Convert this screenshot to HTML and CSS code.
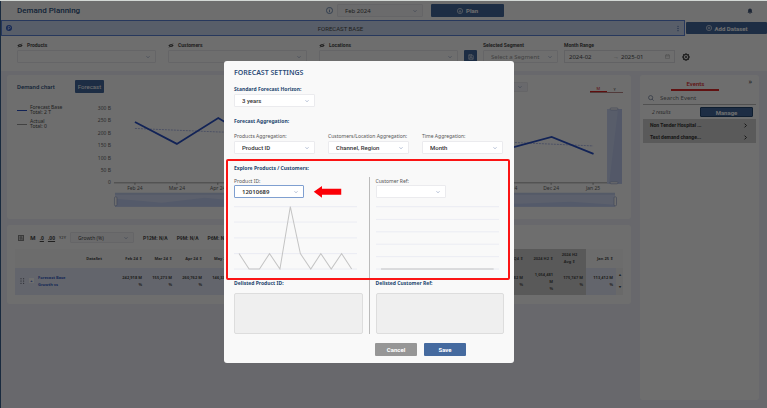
FILE: index.html
```
<!DOCTYPE html>
<html lang="en">
<head>
    <meta charset="UTF-8">
    <meta name="viewport" content="width=device-width, initial-scale=1.0">
    <title>Demand Planning</title>
    <link rel="stylesheet" href="styles.css">
</head>
<body>

    <div class="app">
        <header class="topbar">
            <h1 class="topbar-title">Demand Planning</h1>
            <svg class="icon-info" viewBox="0 0 16 16" fill="none" stroke="currentColor" stroke-width="1.6"><circle cx="8" cy="8" r="7"/><path d="M8 7v5M8 4v1.6"/></svg>
            <select class="select topbar-month" aria-label="Month"><option>Feb 2024</option></select>
            <button class="btn btn-plan"><svg class="btn-icon" viewBox="0 0 16 16" fill="none" stroke="currentColor" stroke-width="1.6"><circle cx="8" cy="8" r="7"/><path d="M8 4.5v7M5 8.500l3 3 3-3"/></svg>Plan</button>
            <svg class="icon-bell" viewBox="0 0 16 16" fill="currentColor"><path d="M8 1a5 5 0 0 0-5 5v4l-1.500 2.500h13L13 10V6a5 5 0 0 0-5-5zM6 13.500h4a2 2 0 0 1-4 0z"/></svg>
        </header>

        <div class="dataset-row">
            <div class="dataset">
                <svg class="icon-p" viewBox="0 0 16 16"><circle cx="8" cy="8" r="8" fill="#3560c8"/><path d="M6 13V4h3a2.500 2.500 0 0 1 0 5.500H6" fill="none" stroke="#dce8ff" stroke-width="1.8"/></svg>
                <span class="dataset-name">FORECAST BASE</span>
                <svg class="icon-dots" viewBox="0 0 4 16" fill="#4d6fb0"><circle cx="2" cy="3" r="1.500"/><circle cx="2" cy="8" r="1.500"/><circle cx="2" cy="13" r="1.500"/></svg>
            </div>
            <button class="btn btn-dataset"><svg class="btn-icon" viewBox="0 0 16 16" fill="none" stroke="currentColor" stroke-width="1.6"><circle cx="8" cy="8" r="7"/><path d="M8 4.500v7M4.500 8h7"/></svg>Add Dataset</button>
        </div>

        <div class="filters">
            <div class="field field-wide">
                <label for="products"><svg class="icon-eye" viewBox="0 0 18 14"><path d="M1 7Q9-2 17 7Q9 16 1 7z" fill="currentColor"/><circle cx="9" cy="7" r="2.500" fill="#fff"/><path d="M3 13L15 1" stroke="currentColor" stroke-width="2"/></svg>Products</label>
                <select class="select" id="products"><option></option></select>
            </div>
            <div class="field field-wide">
                <label for="customers"><svg class="icon-eye" viewBox="0 0 18 14"><path d="M1 7Q9-2 17 7Q9 16 1 7z" fill="currentColor"/><circle cx="9" cy="7" r="2.500" fill="#fff"/><path d="M3 13L15 1" stroke="currentColor" stroke-width="2"/></svg>Customers</label>
                <select class="select" id="customers"><option></option></select>
            </div>
            <div class="field field-wide">
                <label for="locations"><svg class="icon-eye" viewBox="0 0 18 14"><path d="M1 7Q9-2 17 7Q9 16 1 7z" fill="currentColor"/><circle cx="9" cy="7" r="2.500" fill="#fff"/><path d="M3 13L15 1" stroke="currentColor" stroke-width="2"/></svg>Locations</label>
                <select class="select" id="locations"><option></option></select>
            </div>
            <button class="btn btn-save-filter" aria-label="Save segment"><svg viewBox="0 0 16 16" fill="none" stroke="currentColor" stroke-width="1.500"><path d="M2 2h9l3 3v9H2zM5 2v4h5V2M5 14v-5h6v5"/></svg></button>
            <div class="field field-segment">
                <label for="segment">Selected Segment</label>
                <select class="select muted" id="segment"><option>Select a Segment</option></select>
            </div>
            <div class="field field-range">
                <label for="from">Month Range</label>
                <div class="range">
                    <input id="from" type="text" value="2024-02">
                    <span class="range-sep">→</span>
                    <input type="text" value="2025-01" aria-label="Month range end">
                    <svg class="icon-cal" viewBox="0 0 16 16" fill="none" stroke="currentColor" stroke-width="1.300"><path d="M1.500 3h13v11h-13zM1.500 6.500h13M5 1v3M11 1v3"/></svg>
                </div>
            </div>
            <svg class="icon-gear" viewBox="0 0 16 16" fill="none" stroke="currentColor"><circle cx="8" cy="8" r="5.500" stroke-width="2.500"/><circle cx="8" cy="8" r="1.800" fill="currentColor"/><path d="M8 0v3M8 13v3M0 8h3M13 8h3M2.400 2.400l2 2M11.600 11.600l2 2M13.600 2.400l-2 2M4.400 11.600l-2 2" stroke-width="2"/></svg>
        </div>

        <main class="content">
            <div class="main-col">
                <section class="card chart-card">
                    <div class="chart-head">
                        <h2>Demand chart</h2>
                        <button class="btn btn-forecast">Forecast</button>
                        <select class="select chart-select" aria-label="Chart type"><option></option></select>
                        <div class="period"><button class="active">M</button><button>Y</button></div>
                    </div>
                    <div class="chart-body">
                        <ul class="legend">
                            <li class="legend-base">Forecast Base<br>Total: 2 T</li>
                            <li class="legend-actual">Actual<br>Total: 0</li>
                        </ul>
                        <svg class="demand-chart" viewBox="97 100 527 115">
                            <g class="chart-text" text-anchor="end">
                                <text x="111" y="110">300 B</text>
                                <text x="111" y="122">250 B</text>
                                <text x="111" y="135">200 B</text>
                                <text x="111" y="147">150 B</text>
                                <text x="111" y="160">100 B</text>
                                <text x="111" y="172">50 B</text>
                                <text x="111" y="184">0</text>
                            </g>
                            <path d="M114 183H622M135 183v2M177 183v2M218 183v2M552 183v2M594 183v2" stroke="#777" stroke-width="0.700"/>
                            <g class="chart-text" text-anchor="middle">
                                <text x="135" y="190">Feb 24</text>
                                <text x="177" y="190">Mar 24</text>
                                <text x="218" y="190">Apr 24</text>
                                <text x="260" y="190">May 24</text>
                                <text x="510" y="190">Nov 24</text>
                                <text x="552" y="190">Dec 24</text>
                                <text x="594" y="190">Jan 25</text>
                            </g>
                            <path d="M135 128.500L218 132L300 134L420 139L513 142.500L594 146" fill="none" stroke="#8c9bdc" stroke-width="0.700" stroke-dasharray="2 1"/>
                            <path d="M135 122L177 144L218.500 118L260 143L302 130L344 150L427 125L469 140L510 148.500L552.500 137L594.500 154" fill="none" stroke="#2b52c8" stroke-width="1.800"/>
                            <rect x="115" y="193" width="501" height="14" fill="#d5dffa"/>
                            <path d="M115 199L140 201L162 203L205 198L260 203L480 203L520 204L572 202L616 205V207H115z" fill="#c3d0f5"/>
                            <rect x="115" y="193" width="501" height="2" fill="#c4d1ee"/>
                            <rect x="114.500" y="197" width="2.500" height="9" rx="1" fill="#fff" stroke="#8e9cc4" stroke-width="0.600"/>
                            <rect x="615" y="197" width="2.500" height="9" rx="1" fill="#fff" stroke="#8e9cc4" stroke-width="0.600"/>
                            <rect x="608" y="109" width="15" height="75" fill="#cdd8f6"/>
                            <path d="M619 109h4v75h-13z" fill="#c0cdf2"/>
                            <rect x="611" y="108" width="8" height="2" rx="1" fill="#fff" stroke="#8e9cc4" stroke-width="0.600"/>
                            <rect x="611" y="182" width="8" height="2" rx="1" fill="#fff" stroke="#8e9cc4" stroke-width="0.600"/>
                        </svg>
                    </div>
                </section>

                <section class="card table-card">
                    <div class="tools">
                        <button class="tool" aria-label="Export"><svg viewBox="0 0 16 16" fill="none" stroke="currentColor" stroke-width="2"><path d="M1 1h14v14H1zM4 5h8M4 8h8M4 11h5M11 9v4"/></svg></button>
                        <button class="tool tool-m">M</button>
                        <button class="tool tool-dec">.0</button>
                        <button class="tool tool-dec">.00</button>
                        <button class="tool tool-y">Y2Y</button>
                        <select class="select growth" aria-label="Measure"><option>Growth (%)</option></select>
                        <b>P12M: N/A</b>
                        <b>P9M: N/A</b>
                        <b>P6M: N/A</b>
                    </div>
                    <div class="table-wrap">
                        <table class="grid">
                            <colgroup>
                                <col class="col-drag"><col class="col-name"><col class="col-num"><col class="col-num"><col class="col-num"><col class="col-num"><col><col class="col-num"><col class="col-num"><col class="col-num"><col class="col-num"><col class="col-scroll">
                            </colgroup>
                            <thead>
                                <tr>
                                    <th></th><th class="name-head">DataSet</th><th>Feb 24 ⇕</th><th>Mar 24 ⇕</th><th>Apr 24 ⇕</th><th>May 24 ⇕</th><th></th>
                                    <th class="sum">2024 Q4 ⇕</th><th class="sum">2024 H2 ⇕</th><th class="sum center">2024 H2<br>Avg ⇕</th><th>Jan 25 ⇕</th><th></th>
                                </tr>
                            </thead>
                            <tbody>
                                <tr>
                                    <td><svg class="icon-drag" viewBox="0 0 12 16" fill="#445"><circle cx="2" cy="2" r="1.500"/><circle cx="9" cy="2" r="1.500"/><circle cx="2" cy="8" r="1.500"/><circle cx="9" cy="8" r="1.500"/><circle cx="2" cy="14" r="1.500"/><circle cx="9" cy="14" r="1.500"/></svg></td>
                                    <td class="name"><button class="expand">+</button><span>Forecast Base<br>Growth vs</span></td>
                                    <td>242,918 M<br>%</td><td>155,273 M<br>%</td><td>260,762 M<br>%</td><td>146,331 M<br>%</td><td></td>
                                    <td class="sum">525,782 M<br>%</td><td class="sum">1,054,481<br>M<br>%</td><td class="sum">175,747 M<br>%</td><td>113,412 M<br>%</td><td class="scroll"><span>▴</span><span>▾</span></td>
                                </tr>
                            </tbody>
                        </table>
                    </div>
                </section>
            </div>

            <aside class="card events">
                <div class="events-tabs"><button class="events-tab">Events</button><button class="collapse" aria-label="Collapse">»</button></div>
                <div class="search">
                    <svg viewBox="0 0 16 16" fill="none" stroke="currentColor" stroke-width="1.500"><circle cx="7" cy="7" r="5.500"/><path d="M11 11l4 4"/></svg>
                    <input type="text" placeholder="Search Event" aria-label="Search Event">
                </div>
                <div class="results"><i>2 results</i><button class="btn btn-manage">Manage</button></div>
                <ul class="event-list">
                    <li><a href="#">Non Tender Hospital ...<svg viewBox="0 0 8 8"><path d="M2.500 1l3 3-3 3" fill="none" stroke="currentColor" stroke-width="1.600"/></svg></a></li>
                    <li><a href="#">Test demand change...<svg viewBox="0 0 8 8"><path d="M2.500 1l3 3-3 3" fill="none" stroke="currentColor" stroke-width="1.600"/></svg></a></li>
                </ul>
            </aside>
        </main>
    </div>

    <div class="overlay">
        <div class="modal" role="dialog" aria-labelledby="modal-title">
            <h2 class="modal-title" id="modal-title">FORECAST SETTINGS</h2>

            <label class="section-label" for="horizon">Standard Forecast Horizon:</label>
            <select class="select" id="horizon"><option>3 years</option></select>

            <h3 class="section-label section-agg">Forecast Aggregation:</h3>
            <div class="agg">
                <div>
                    <label for="agg-product">Products Aggregation:</label>
                    <select class="select" id="agg-product"><option>Product ID</option></select>
                </div>
                <div>
                    <label for="agg-customer">Customers/Location Aggregation:</label>
                    <select class="select" id="agg-customer"><option>Channel, Region</option></select>
                </div>
                <div>
                    <label for="agg-time">Time Aggregation:</label>
                    <select class="select" id="agg-time"><option>Month</option></select>
                </div>
            </div>

            <h3 class="section-label section-explore">Explore Products / Customers:</h3>
            <div class="explore">
                <div class="explore-col">
                    <label for="product-id">Product ID:</label>
                    <div class="pick">
                        <select class="select focused" id="product-id"><option>12010689</option></select>
                        <svg class="arrow" viewBox="0 0 87 38"><path d="M0 18L26 0V9H87V28H26V37z" fill="#fb0007"/></svg>
                    </div>
                    <svg class="mini-chart" viewBox="0 0 368 190">
                        <path class="mini-grid" d="M0 2H368M0 48H368M0 95H368M0 142H368M0 188H368"/>
                        <path class="mini-line" d="M15 142L45 188H76L106 142L137 188L168 2L198 142L229 188L259 142L290 188L321 142L351 188"/>
                    </svg>
                    <label class="section-label" for="delisted-product">Delisted Product ID:</label>
                    <textarea id="delisted-product" disabled></textarea>
                </div>
                <div class="divider"></div>
                <div class="explore-col">
                    <label for="customer-ref">Customer Ref:</label>
                    <div class="pick">
                        <select class="select" id="customer-ref"><option></option></select>
                    </div>
                    <svg class="mini-chart" viewBox="0 0 368 190">
                        <path class="mini-grid" d="M0 2H368M0 40H368M0 77H368M0 114H368M0 151H368M0 188H368"/>
                        <path class="mini-line" d="M15 188H351"/>
                    </svg>
                    <label class="section-label" for="delisted-customer">Delisted Customer Ref:</label>
                    <textarea id="delisted-customer" disabled></textarea>
                </div>
            </div>

            <div class="actions">
                <button class="btn btn-cancel">Cancel</button>
                <button class="btn">Save</button>
            </div>

            <div class="highlight"></div>
        </div>
    </div>

</body>
</html>
```
FILE: styles.css
```
* {
    box-sizing: border-box;
}

body {
    margin: 0;
    min-height: 100vh;
    border-top: 1px solid #d3d8d5;
    background: #f0f2fa;
    font-family: 'Noto Sans', 'Open Sans', sans-serif;
    font-size: 5px;
    color: #4c4c4c;
}

h1, h2, h3, ul {
    margin: 0;
    padding: 0;
    list-style: none;
}

button, input, select, textarea {
    font: inherit;
    color: inherit;
    border: 0;
    padding: 0;
    background: none;
}

svg {
    display: block;
}

.app {
    display: flex;
    flex-direction: column;
    min-height: calc(100vh - 1px);
    border-left: 1px solid #3b6390;
}

/* Shared controls */
.select {
    display: block;
    width: 100%;
    height: 13px;
    padding: 0 12px 0 7px;
    appearance: none;
    border: 1px solid #ebebee;
    border-radius: 1px;
    background: #fff url("data:image/svg+xml,%3Csvg xmlns='http://www.w3.org/2000/svg' viewBox='0 0 8 8'%3E%3Cpath d='M1 2.500l3 3 3-3' fill='none' stroke='%238899bb' stroke-width='1.300'/%3E%3C/svg%3E") no-repeat right 5px center / 4px 4px;
}

.btn {
    display: flex;
    align-items: center;
    justify-content: center;
    gap: 3px;
    height: 13px;
    border-radius: 1px;
    background: #456a9f;
    color: #fff;
    font-family: Roboto, sans-serif;
    font-size: 6px;
    font-weight: 700;
}

.btn-icon {
    width: 6px;
    height: 6px;
}

/* Header */
.topbar {
    display: flex;
    align-items: center;
    height: 19px;
    padding: 0 14px 0 16px;
    background: #fff;
}

.topbar-title {
    width: 42%;
    font-family: Roboto, sans-serif;
    font-size: 8px;
    font-weight: 500;
    color: #2c527f;
}

.icon-info {
    width: 7px;
    height: 7px;
    margin-right: 4px;
    color: #456a9f;
}

.topbar-month {
    width: 86px;
    margin-right: 8px;
    background-color: #f8f8fa;
    font-size: 6px;
}

.btn-plan {
    width: 73px;
}

.icon-bell {
    width: 6px;
    height: 6px;
    margin-left: auto;
    color: #44597c;
}

.dataset-row {
    display: flex;
    gap: 1px;
    align-items: center;
    background: #fff;
}

.dataset {
    flex: 1;
    display: flex;
    align-items: center;
    height: 16px;
    padding: 0 5px 0 4px;
    border: 1px solid #5b83d8;
    background: #cddbf3;
}

.dataset-name {
    flex: 1;
    padding-right: 8px;
    text-align: center;
    font-family: Roboto, sans-serif;
    font-size: 6px;
}

.icon-p {
    width: 6px;
    height: 6px;
}

.icon-dots {
    width: 2px;
    height: 7px;
}

.btn-dataset {
    width: 81px;
    height: 12px;
}

/* Filters */
.filters {
    display: flex;
    align-items: flex-end;
    gap: 6px;
    height: 35px;
    padding: 0 91px 8px 16px;
    background: #fff;
}

.field label {
    display: flex;
    align-items: center;
    gap: 4px;
    height: 10px;
    font-family: Roboto, sans-serif;
    font-size: 5px;
    font-weight: 700;
}

.field-wide {
    flex: 1;
    margin-right: 6px;
}

.field-wide + .btn-save-filter {
    margin-left: -6px;
}

.field-segment {
    width: 75px;
}

.field-segment .select {
    font-size: 6px;
}

.muted {
    color: #999;
}

.field-range {
    width: 111px;
}

.range {
    display: flex;
    align-items: center;
    height: 13px;
    padding: 0 4px;
    border: 1px solid #e4e4e8;
    font-size: 6px;
}

.range input {
    flex: 1;
    min-width: 0;
}

.range-sep {
    width: 8px;
    color: #aaa;
}

.icon-eye {
    width: 6px;
    height: 5px;
}

.icon-cal {
    width: 5px;
    height: 5px;
    color: #999;
}

.btn-save-filter {
    width: 13px;
}

.btn-save-filter svg {
    width: 6px;
    height: 6px;
}

.icon-gear {
    width: 8px;
    height: 8px;
    margin: 0 -14px 2px 1px;
}

/* Content */
.content {
    flex: 1;
    display: flex;
    gap: 9px;
    padding: 4px 8px 8px 6px;
}

.main-col {
    flex: 1;
    min-width: 0;
    display: flex;
    flex-direction: column;
    gap: 6px;
}

.card {
    border-radius: 3px;
    background: #fff;
}

.chart-card {
    padding: 5px 8px 4px 10px;
}

.chart-head {
    display: flex;
    align-items: center;
}

.chart-head h2 {
    width: 58px;
    font-family: Roboto, sans-serif;
    font-size: 6px;
    font-weight: 500;
    color: #2c527f;
}

.btn-forecast {
    width: 29px;
    font-weight: 400;
}

.chart-select {
    width: 80px;
    height: 10px;
    margin: 0 62px 0 auto;
    background-color: #f3f4fb;
}

.period {
    display: flex;
    align-self: flex-end;
    width: 33px;
    border-bottom: 1px solid #bb8a8a;
    font-size: 4px;
}

.period button {
    flex: 1;
}

.period .active {
    color: #d22;
    border-bottom: 1px solid #d22;
}

.chart-body {
    display: flex;
    align-items: flex-start;
    padding-top: 7px;
}

.legend {
    width: 80px;
    padding-top: 5px;
    line-height: 5px;
}

.legend li {
    position: relative;
    margin-bottom: 4px;
    padding-left: 13px;
}

.legend li::before {
    content: "";
    position: absolute;
    left: 0;
    top: 5px;
    width: 10px;
    height: 1px;
    background: #999;
}

.legend .legend-base::before {
    background: #2b52c8;
}

.demand-chart {
    flex: 1;
    min-width: 0;
}

.chart-text {
    font-size: 5px;
    fill: #666;
}

/* Table */
.table-card {
    padding: 7px 8px 9px;
}

.tools {
    display: flex;
    align-items: center;
    gap: 4px;
    height: 12px;
    margin-bottom: 5px;
    padding-left: 3px;
}

.tools b {
    margin-left: 5px;
    font-family: Roboto, sans-serif;
    font-size: 5px;
}

.tool svg {
    width: 6px;
    height: 6px;
}

.tool-m {
    margin-left: 2px;
    font-size: 6px;
    font-weight: 700;
}

.tool-dec {
    text-decoration: underline;
    font-weight: 700;
}

.tool-y {
    font-size: 4px;
}

.growth {
    width: 64px;
    height: 11px;
    background-color: #f8f8fa;
}

.table-wrap {
    overflow: hidden;
}

.grid {
    width: 100%;
    table-layout: fixed;
    border-collapse: collapse;
    font-size: 4px;
    line-height: 7px;
    font-weight: 700;
}

.col-drag {
    width: 14px;
}

.col-name {
    width: 86px;
}

.col-num {
    width: 30px;
}

.col-scroll {
    width: 7px;
}

.grid th, .grid td {
    padding: 0 3px 0 0;
    text-align: right;
    white-space: nowrap;
}

.grid th {
    height: 19px;
    background: #fafafa;
}

.grid td {
    height: 27px;
    background: #e6ebfa;
}

.grid .name-head {
    padding-right: 13px;
}

.grid .sum {
    background: #cfcfcf;
}

.grid .center {
    text-align: center;
}

.grid .name {
    text-align: left;
    color: #3560c8;
}

.name span {
    display: inline-block;
    vertical-align: middle;
}

.expand {
    width: 5px;
    margin-right: 4px;
    background: #fff;
    line-height: 5px;
}

.grid .scroll {
    padding: 0;
    background: #f4f4f4;
    text-align: center;
}

.scroll span {
    display: block;
    line-height: 12px;
}

.icon-drag {
    width: 5px;
    height: 6px;
    margin-left: 5px;
}

/* Events */
.events {
    width: 119px;
    padding: 2px 3px;
}

.events-tabs {
    display: flex;
    justify-content: flex-end;
    gap: 29px;
    padding-right: 4px;
    height: 14px;
}

.events-tab {
    width: 48px;
    border-bottom: 2px solid #e02a2a;
    color: #e02a2a;
    font-family: Roboto, sans-serif;
    font-size: 6px;
    font-weight: 500;
}

.collapse {
    height: 10px;
    font-size: 7px;
    line-height: 10px;
}

.search {
    display: flex;
    align-items: center;
    gap: 6px;
    height: 14px;
    padding-left: 5px;
    border-bottom: 1px solid #bbb;
    font-size: 6px;
}

.search svg {
    width: 6px;
    height: 6px;
    color: #44597c;
}

.search input {
    width: 80px;
}

.results {
    display: flex;
    align-items: center;
    justify-content: space-between;
    height: 14px;
    padding: 0 3px 0 9px;
    color: #666;
}

.btn-manage {
    width: 53px;
    height: 10px;
    border: 1px solid #24466f;
}

.event-list {
    background: #d0d0d0;
}

.event-list a {
    display: flex;
    align-items: center;
    justify-content: space-between;
    height: 12px;
    padding: 0 8px 0 7px;
    color: #333;
    font-family: Roboto, sans-serif;
    font-weight: 700;
    text-decoration: none;
}

.event-list svg {
    width: 5px;
    height: 5px;
}

/* Modal */
.overlay {
    position: absolute;
    inset: 1px 0 0 0;
    display: flex;
    justify-content: center;
    align-items: flex-start;
    padding: 60px 29px 0 0;
    background: rgba(0, 0, 0, 0.57);
}

.modal {
    position: relative;
    width: 290px;
    padding: 6px 10px 7px;
    border-radius: 3px;
    background: #f9f9f9;
    color: #333;
}

.modal label, .section-label {
    display: block;
    height: 10px;
    line-height: 10px;
    font-size: 5px;
    font-weight: 400;
    color: #555;
}

.modal-title {
    height: 12px;
    margin-bottom: 5px;
    line-height: 12px;
    font-size: 7px;
    font-weight: 600;
    color: #2c4c78;
}

.modal .section-label {
    font-size: 5px;
    font-weight: 700;
    color: #24466f;
}

.modal .select {
    width: 81px;
    font-family: Roboto, sans-serif;
    font-size: 6px;
    font-weight: 500;
}

.modal .section-agg {
    margin: 9px 0 5px;
}

.agg {
    display: flex;
    gap: 13px;
}

.agg > div {
    width: 81px;
}

.agg label {
    white-space: nowrap;
}

.modal .section-explore {
    margin: 9px 0 4px;
}

.explore {
    display: grid;
    grid-template-columns: 1fr 1px 1fr;
    gap: 6px;
}

.explore-col > label:first-child {
    height: 8px;
    line-height: 8px;
}

.divider {
    background: #bbb;
}

.pick {
    display: flex;
    align-items: center;
    gap: 9px;
    margin-bottom: 8px;
}

.modal .pick .select {
    width: 70px;
    font-family: 'Noto Sans', sans-serif;
    font-weight: 600;
}

.modal .focused {
    border-color: #7f9fd0;
}

.arrow {
    width: 29px;
    height: 12px;
}

.mini-chart {
    width: 96%;
    margin-bottom: 8px;
}

.mini-grid {
    fill: none;
    stroke: #e4e6f0;
    stroke-width: 2;
}

.mini-line {
    fill: none;
    stroke: #c4c4c4;
    stroke-width: 3;
}

textarea {
    display: block;
    width: 100%;
    height: 41px;
    margin-top: 5px;
    border: 1px solid #ddd;
    border-radius: 2px;
    background: #efefef;
    resize: none;
}

.actions {
    display: flex;
    gap: 7px;
    margin: 9px 0 0 141px;
}

.actions .btn {
    width: 42px;
}

.actions .btn-cancel {
    background: #969696;
}

/* Red frame round the explore block */
.highlight {
    position: absolute;
    left: 2px;
    right: 4px;
    top: 98px;
    height: 121px;
    border: 2px solid #fb1414;
    border-radius: 2px;
    pointer-events: none;
}
```
